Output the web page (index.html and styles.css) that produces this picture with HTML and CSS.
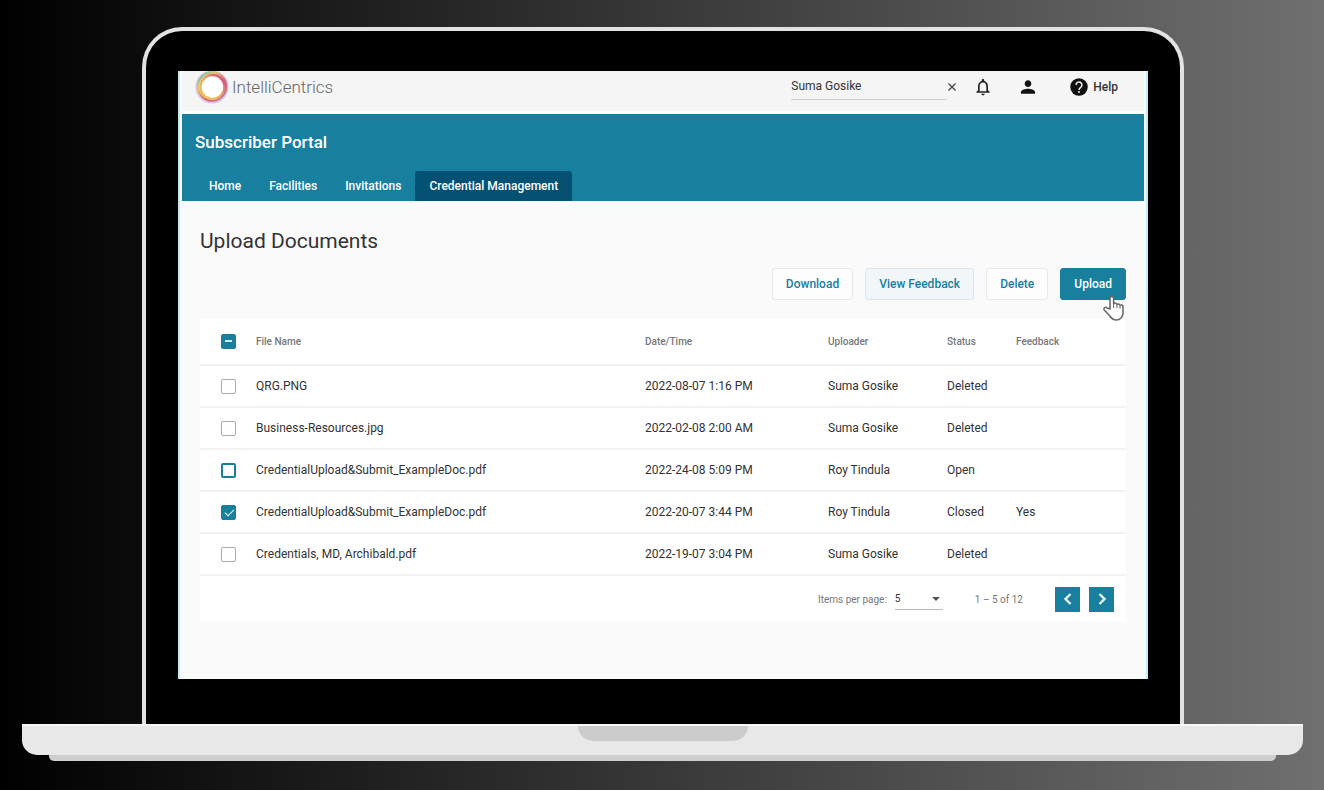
FILE: index.html
```html
<!DOCTYPE html>
<html lang="en">
<head>
<meta charset="utf-8">
<title>Subscriber Portal</title>
<link rel="stylesheet" href="styles.css">
</head>
<body>
<div class="laptop">
  <div class="lid">
    <div class="screen">
      <header class="topbar">
        <a class="brand" href="#">
          <svg class="brand-mark" viewBox="0 0 34 34" aria-hidden="true">
            <defs>
              <linearGradient id="ring" x1="0" y1="0" x2="1" y2="1">
                <stop offset="0" stop-color="#58b9b4"/>
                <stop offset="0.3" stop-color="#e5c86c"/>
                <stop offset="0.65" stop-color="#d9557b"/>
                <stop offset="1" stop-color="#a67cc2"/>
              </linearGradient>
              <linearGradient id="inner" x1="0" y1="1" x2="1" y2="0">
                <stop offset="0" stop-color="#f2cf55"/>
                <stop offset="0.5" stop-color="#eda65e"/>
                <stop offset="1" stop-color="#c9418a"/>
              </linearGradient>
            </defs>
            <circle cx="17" cy="17" r="12" fill="#fff"/>
            <circle cx="17" cy="17" r="15.500" fill="none" stroke="#d9c6e4" stroke-width="2"/>
            <circle cx="17" cy="16.500" r="14" fill="none" stroke="url(#ring)" stroke-width="2.500"/>
            <circle cx="17.500" cy="17" r="12" fill="none" stroke="url(#inner)" stroke-width="2.500"/>
          </svg>
          <span>IntelliCentrics</span>
        </a>
        <div class="tools">
          <input class="search" type="text" value="Suma Gosike" aria-label="Subscriber">
          <button class="icon-btn clear" type="button" aria-label="Clear">
            <svg width="10" height="10" viewBox="0 0 10 10"><path d="M1.500 1.500l7 7M8.500 1.500l-7 7" stroke="#444" stroke-width="1.300"/></svg>
          </button>
          <button class="icon-btn bell" type="button" aria-label="Notifications">
            <svg width="20" height="20" viewBox="0 0 24 24" fill="#222"><path d="M12 22c1.100 0 2-.9 2-2h-4c0 1.100.9 2 2 2zm6-6v-5c0-3.070-1.630-5.640-4.500-6.320V4c0-.83-.67-1.500-1.500-1.500s-1.500.67-1.500 1.500v.68C7.640 5.360 6 7.920 6 11v5l-2 2v1h16v-1l-2-2zm-2 1H8v-6c0-2.480 1.510-4.500 4-4.500s4 2.020 4 4.500v6z"/></svg>
          </button>
          <button class="icon-btn user" type="button" aria-label="Account">
            <svg width="20" height="20" viewBox="0 0 24 24" fill="#111"><path d="M12 12c2.210 0 4-1.790 4-4s-1.790-4-4-4-4 1.790-4 4 1.790 4 4 4zm0 2c-2.670 0-8.500 1.340-8.500 4v2h17v-2c0-2.660-5.830-4-8.500-4z"/></svg>
          </button>
          <button class="icon-btn help" type="button">
            <svg width="20" height="20" viewBox="0 0 24 24" aria-hidden="true"><circle cx="12" cy="12" r="10.500" fill="#111"/><path d="M8.500 9.500a3.500 3.500 0 1 1 5.700 2.700c-1.300 1-2.200 1.600-2.200 3.300" fill="none" stroke="#eee" stroke-width="1.800"/><circle cx="12" cy="18" r="1.200" fill="#eee"/></svg>
            <span>Help</span>
          </button>
        </div>
      </header>

      <div class="banner">
        <div class="portal">Subscriber Portal</div>
        <nav class="tabs">
          <a href="#">Home</a>
          <a href="#">Facilities</a>
          <a href="#">Invitations</a>
          <a class="active" href="#">Credential Management</a>
        </nav>
      </div>

      <main class="content">
        <h1>Upload Documents</h1>
        <div class="actions">
          <button class="btn" type="button">Download</button>
          <button class="btn tinted" type="button">View Feedback</button>
          <button class="btn" type="button">Delete</button>
          <button class="btn primary" type="button">Upload
            <svg class="pointer" width="24" height="28" viewBox="0 0 24 28" aria-hidden="true"><path d="M8 15V4.500c0-2.600 3.600-2.600 3.600 0V10c.6-1.300 3-1.200 3.300.5.700-1 2.800-.7 3.100.8.800-.8 3-.4 3 1.700v6c0 4-3 7-6.500 7-3.700 0-5.500-2-7-4.500L2.200 16c-1.200-2 1.400-3.500 2.800-2z" fill="#fff" stroke="#666" stroke-width="1.500" stroke-linejoin="round"/><path d="M11.600 10v4M15 11v3M18 12v2.500" stroke="#777" stroke-width="1.200"/></svg>
          </button>
        </div>

        <section class="card">
          <table class="docs">
            <colgroup><col class="c-check"><col><col class="c-date"><col class="c-uploader"><col class="c-status"><col class="c-feedback"></colgroup>
            <thead>
              <tr><th><input class="box mixed" type="checkbox" aria-label="Select all"></th><th>File Name</th><th>Date/Time</th><th>Uploader</th><th>Status</th><th>Feedback</th></tr>
            </thead>
            <tbody>
              <tr><td><input class="box" type="checkbox" aria-label="Select QRG.PNG"></td><td>QRG.PNG</td><td>2022-08-07 1:16 PM</td><td>Suma Gosike</td><td>Deleted</td><td></td></tr>
              <tr><td><input class="box" type="checkbox" aria-label="Select Business-Resources.jpg"></td><td>Business-Resources.jpg</td><td>2022-02-08 2:00 AM</td><td>Suma Gosike</td><td>Deleted</td><td></td></tr>
              <tr><td><input class="box outlined" type="checkbox" aria-label="Select CredentialUpload&amp;Submit_ExampleDoc.pdf, open"></td><td>CredentialUpload&amp;Submit_ExampleDoc.pdf</td><td>2022-24-08 5:09 PM</td><td>Roy Tindula</td><td>Open</td><td></td></tr>
              <tr><td><input class="box" type="checkbox" checked aria-label="Select CredentialUpload&amp;Submit_ExampleDoc.pdf, closed"></td><td>CredentialUpload&amp;Submit_ExampleDoc.pdf</td><td>2022-20-07 3:44 PM</td><td>Roy Tindula</td><td>Closed</td><td>Yes</td></tr>
              <tr><td><input class="box" type="checkbox" aria-label="Select Credentials, MD, Archibald.pdf"></td><td>Credentials, MD, Archibald.pdf</td><td>2022-19-07 3:04 PM</td><td>Suma Gosike</td><td>Deleted</td><td></td></tr>
            </tbody>
          </table>
          <div class="pager">
            <label for="size">Items per page:</label>
            <span class="select-wrap"><select id="size"><option>5</option></select></span>
            <span class="range">1 – 5 of 12</span>
            <button class="page-btn" type="button" aria-label="Previous page"><svg width="16" height="16" viewBox="0 0 16 16"><path d="M10.500 3L5.500 8l5 5" fill="none" stroke="#e8f5f8" stroke-width="2.400"/></svg></button>
            <button class="page-btn" type="button" aria-label="Next page"><svg width="16" height="16" viewBox="0 0 16 16"><path d="M5.500 3l5 5-5 5" fill="none" stroke="#e8f5f8" stroke-width="2.400"/></svg></button>
          </div>
        </section>
      </main>
    </div>
  </div>
  <div class="base"><div class="notch"></div></div>
  <div class="foot"></div>
</div>
</body>
</html>
```
FILE: styles.css
```css
* { box-sizing: border-box; }

body {
  margin: 0;
  min-height: 100vh;
  background: linear-gradient(90deg, #000, #707070);
  font-family: Roboto, "Liberation Sans", sans-serif;
  font-size: 12px;
  color: #333;
}

a { color: inherit; text-decoration: none; }
button, input, select { font: inherit; color: inherit; }
button { cursor: pointer; }

.laptop { padding: 27px 21px 28px 22px; }

.lid {
  margin: 0 119px 0 120px;
  padding: 40px 32px 45px;
  border: 4px solid #e2e2e2;
  border-bottom: 0;
  border-radius: 40px 40px 0 0;
  background: #000;
}

.screen {
  min-height: 608px;
  padding: 0 2px;
  border: solid #c2ecf6;
  border-width: 0 2px;
  background: #fafafa;
  overflow: hidden;
}

.topbar {
  display: flex;
  align-items: center;
  justify-content: space-between;
  height: 43px;
  padding: 0 26px 9px 13px;
  border-bottom: 3px solid #fff;
  background: #f5f5f5;
}

.brand {
  display: flex;
  align-items: center;
  gap: 3px;
  font-size: 17px;
  font-weight: 300;
  color: #666;
}
.brand-mark { width: 34px; height: 34px; }

.tools { display: flex; align-items: center; }
.search {
  width: 156px;
  height: 26px;
  padding: 0;
  border: 0;
  border-bottom: 1px solid #ccc;
  background: none;
}
.icon-btn {
  display: flex;
  align-items: center;
  gap: 4px;
  padding: 0;
  border: 0;
  background: none;
}
.bell { margin-left: 16px; }
.user { margin-left: 25px; }
.help { margin-left: 31px; font-weight: 500; }

.banner {
  display: flex;
  flex-direction: column;
  justify-content: space-between;
  height: 87px;
  padding: 18px 13px 0;
  background: #187f9e;
  color: #fff;
}
.portal { font-size: 17px; line-height: 20px; font-weight: 500; }
.tabs { display: flex; font-weight: 500; }
.tabs a { padding: 0 14px; line-height: 30px; }
.tabs .active { border-radius: 3px 3px 0 0; background: #055173; }

.content { padding: 28px 18px 0; }
h1 { margin: 0; font-size: 21px; line-height: 24px; font-weight: 400; }

.actions {
  display: flex;
  justify-content: flex-end;
  gap: 12px;
  margin: 15px 0 19px;
}
.btn {
  position: relative;
  height: 32px;
  padding: 0 13px;
  border: 1px solid #e6e8e9;
  border-radius: 3px;
  background: #fdfdfd;
  color: #187f9e;
  font-weight: 500;
}
.tinted { background: #f1f6f9; border-color: #dfe6ea; }
.primary { background: #187f9e; border-color: #187f9e; color: #fff; }
.pointer { position: absolute; right: -1px; top: 25px; }

.card { background: #fff; }
.docs { width: 100%; border-collapse: collapse; table-layout: fixed; }
.c-check { width: 56px; }
.c-date { width: 183px; }
.c-uploader { width: 119px; }
.c-status { width: 69px; }
.c-feedback { width: 110px; }
th, td {
  height: 42px;
  padding: 0;
  border-bottom: 2px solid #f3f3f3;
  text-align: left;
  white-space: nowrap;
}
th { height: 46px; font-size: 10px; font-weight: 500; color: #777; }

.box {
  display: block;
  position: relative;
  appearance: none;
  width: 15px;
  height: 15px;
  margin: 0 auto;
  border: 1px solid #aaa;
  border-radius: 2px;
  background: #fff;
}
.box.outlined { border: 2px solid #187f9e; }
.box.mixed, .box:checked { border-color: #187f9e; background: #187f9e; }
.box.mixed::after {
  content: "";
  position: absolute;
  left: 3px;
  top: 5px;
  width: 7px;
  height: 2px;
  background: #d5edf4;
}
.box:checked::after {
  content: "";
  position: absolute;
  left: 3px;
  top: 3px;
  width: 8px;
  height: 4px;
  border: solid #fff;
  border-width: 0 0 1px 1px;
  transform: rotate(-45deg);
}

.pager {
  display: flex;
  align-items: center;
  justify-content: flex-end;
  height: 46px;
  padding-right: 12px;
  font-size: 10px;
  color: #777;
}
.select-wrap {
  position: relative;
  width: 48px;
  margin: 0 32px 0 8px;
  border-bottom: 1px solid #bbb;
}
.select-wrap::after {
  content: "";
  position: absolute;
  right: 3px;
  top: 8px;
  border: 4px solid transparent;
  border-top-color: #555;
  border-bottom: 0;
}
.select-wrap select {
  display: block;
  appearance: none;
  width: 100%;
  height: 20px;
  padding: 0;
  border: 0;
  background: none;
  color: #333;
}
.range { margin-right: 32px; }
.page-btn {
  display: grid;
  place-items: center;
  width: 25px;
  height: 25px;
  padding: 0;
  border: 0;
  background: #187f9e;
}
.page-btn + .page-btn { margin-left: 9px; }

.base {
  height: 31px;
  border-top: 2px solid #f6f6f6;
  border-radius: 0 0 15px 15px;
  background: #e8e8e8;
}
.notch {
  width: 170px;
  height: 15px;
  margin: 0 auto;
  border-radius: 0 0 15px 15px;
  background: #cbcbcb;
}
.foot {
  height: 6px;
  margin: 0 27px;
  border-radius: 0 0 5px 5px;
  background: #cecece;
}
```
